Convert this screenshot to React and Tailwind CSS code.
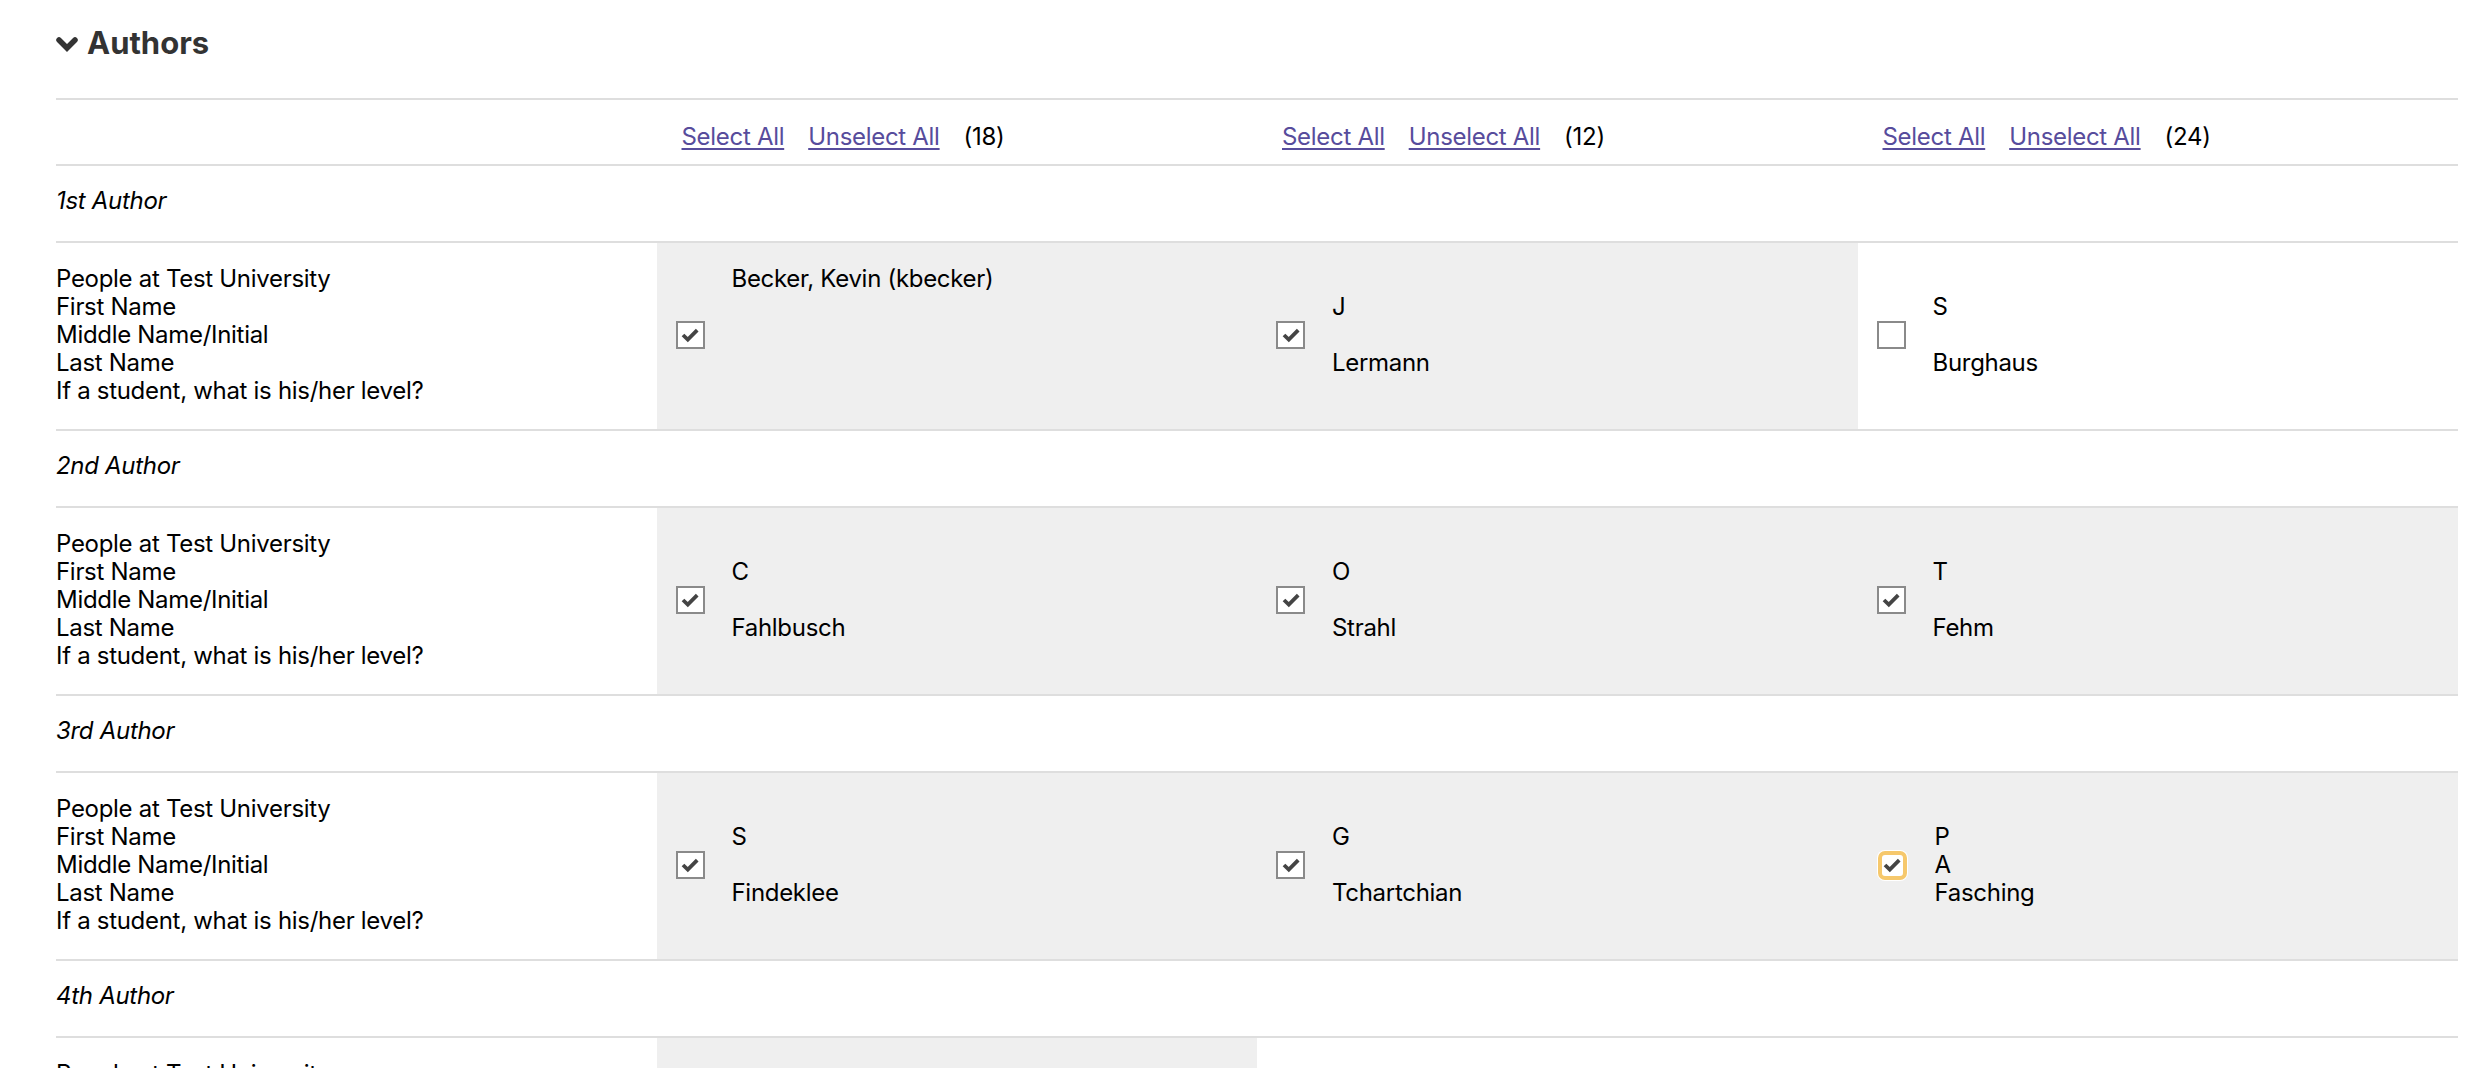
import React from "react";

function CheckMark() {
  return (
    <svg viewBox="0 0 18 14" width="18" height="14" className="overflow-visible">
      <path d="M2 7 L6.8 11.6 L16.2 2.2" fill="none" stroke="#444444" strokeWidth="3.8" strokeLinejoin="miter" />
    </svg>
  );
}

function Checkbox({ checked, focused }) {
  if (focused) {
    return (
      <div className="w-[31px] h-[31px] shrink-0 rounded-[8px] bg-white p-[1px]">
        <div className="w-full h-full rounded-[7px] border-[4px] border-[#f6c86c] bg-white flex items-center justify-center">
          {checked && <CheckMark />}
        </div>
      </div>
    );
  }
  return (
    <div className="w-[29px] h-[28px] shrink-0 border-2 border-[#8a8a8a] bg-white flex items-center justify-center">
      {checked && <CheckMark />}
    </div>
  );
}

function Lines({ lines }) {
  return (
    <div className="flex flex-col">
      {lines.map((l, i) => (
        <div key={i} className="h-[28px] leading-[28px] whitespace-nowrap">
          {l}
        </div>
      ))}
    </div>
  );
}

function DataCell({ gray, checked, focused, lines }) {
  return (
    <div
      className={
        "flex items-center gap-[27px] pl-[19px] pt-[22px] pb-[24px] " +
        (gray ? "bg-[#efefef]" : "bg-white")
      }
    >
      <Checkbox checked={checked} focused={focused} />
      <Lines lines={lines} />
    </div>
  );
}

const LABELS = [
  "People at Test University",
  "First Name",
  "Middle Name/Initial",
  "Last Name",
  "If a student, what is his/her level?",
];

const SECTIONS = [
  {
    title: "1st Author",
    cells: [
      { gray: true, checked: true, lines: ["Becker, Kevin (kbecker)", "", "", "", ""] },
      { gray: true, checked: true, lines: ["", "J", "", "Lermann", ""] },
      { gray: false, checked: false, lines: ["", "S", "", "Burghaus", ""] },
    ],
  },
  {
    title: "2nd Author",
    cells: [
      { gray: true, checked: true, lines: ["", "C", "", "Fahlbusch", ""] },
      { gray: true, checked: true, lines: ["", "O", "", "Strahl", ""] },
      { gray: true, checked: true, lines: ["", "T", "", "Fehm", ""] },
    ],
  },
  {
    title: "3rd Author",
    cells: [
      { gray: true, checked: true, lines: ["", "S", "", "Findeklee", ""] },
      { gray: true, checked: true, lines: ["", "G", "", "Tchartchian", ""] },
      { gray: true, checked: true, focused: true, lines: ["", "P", "A", "Fasching", ""] },
    ],
  },
  {
    title: "4th Author",
    cells: [
      { gray: true, checked: true, lines: ["", "M", "", "Lux", ""] },
      { gray: false, checked: false, lines: ["", "", "", "", ""] },
      { gray: false, checked: false, lines: ["", "", "", "", ""] },
    ],
  },
];

function SelectCell({ count }) {
  return (
    <div className="flex gap-[24px] pl-[25px] pt-[23px] leading-[28px]">
      <a href="#" className="text-[#574c9c] underline decoration-[2px] underline-offset-[3px]">
        Select All
      </a>
      <a href="#" className="text-[#574c9c] underline decoration-[2px] underline-offset-[3px]">
        Unselect All
      </a>
      <span className="text-black">({count})</span>
    </div>
  );
}

export default function App() {
  return (
    <div className="min-h-screen bg-white font-[Inter,sans-serif] text-[24px] tracking-[-0.3px] text-black pl-[56px] pr-[22px]">
      <div className="h-[98px] pt-[25px] flex items-start">
        <div className="flex items-center gap-[9px] h-[36px]">
          <svg viewBox="0 0 22 15" width="22" height="15" className="mt-[3px] overflow-visible">
            <path d="M3 3 L11 11 L19 3" fill="none" stroke="#333333" strokeWidth="5.5" strokeLinecap="round" strokeLinejoin="miter" />
          </svg>
          <h2 className="text-[31px] leading-[36px] font-bold tracking-normal text-[#333333]">Authors</h2>
        </div>
      </div>

      <div className="grid grid-cols-4 h-[66px] border-t-2 border-[#dedede]">
        <div />
        <SelectCell count={18} />
        <SelectCell count={12} />
        <SelectCell count={24} />
      </div>

      {SECTIONS.map((s) => (
        <React.Fragment key={s.title}>
          <div className="h-[77px] border-t-2 border-[#dedede] pt-[21px] leading-[28px] italic">
            {s.title}
          </div>
          <div className="grid grid-cols-4 h-[188px] border-t-2 border-[#dedede]">
            <div className="pt-[22px]">
              <Lines lines={LABELS} />
            </div>
            {s.cells.map((c, i) => (
              <DataCell key={i} {...c} />
            ))}
          </div>
        </React.Fragment>
      ))}
    </div>
  );
}
